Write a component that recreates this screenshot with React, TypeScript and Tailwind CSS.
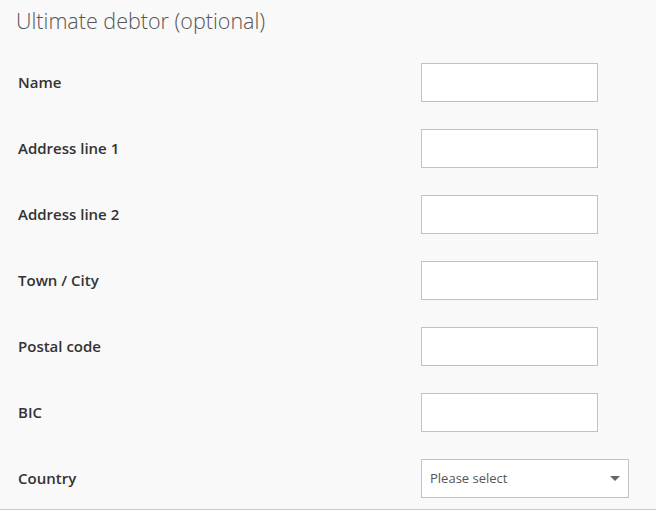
const fields = ['Name', 'Address line 1', 'Address line 2', 'Town / City', 'Postal code', 'BIC']

export default function App() {
  return (
    <div
      className="w-[656px] h-[510px] bg-[#f9f9f9] border-b border-[#c8c8c8] overflow-hidden"
      style={{ fontFamily: '"Open Sans", "Noto Sans", sans-serif' }}
    >
      <h2 className="pl-4 pt-[6px] text-[21.5px] leading-[29px] font-light text-[#555]">
        Ultimate debtor (optional)
      </h2>

      <div className="mt-[28px] flex flex-col gap-[27px]">
        {fields.map((label) => (
          <div key={label} className="flex items-center h-[39px]">
            <label className="w-[421px] pl-[18px] text-[15px] font-semibold text-[#333]">{label}</label>
            <input className="w-[177px] h-[39px] bg-white border border-[#c2c2c2] outline-none" />
          </div>
        ))}

        <div className="flex items-center h-[39px]">
          <label className="w-[421px] pl-[18px] text-[15px] font-semibold text-[#333]">Country</label>
          <div className="w-[208px] h-[39px] bg-white border border-[#c2c2c2] flex items-center justify-between pl-2 pr-[8px]">
            <span className="text-[13px] text-[#555]">Please select</span>
            <svg width="10" height="5" viewBox="0 0 10 5">
              <path d="M0 0h10L5 5z" fill="#666" />
            </svg>
          </div>
        </div>
      </div>
    </div>
  )
}
